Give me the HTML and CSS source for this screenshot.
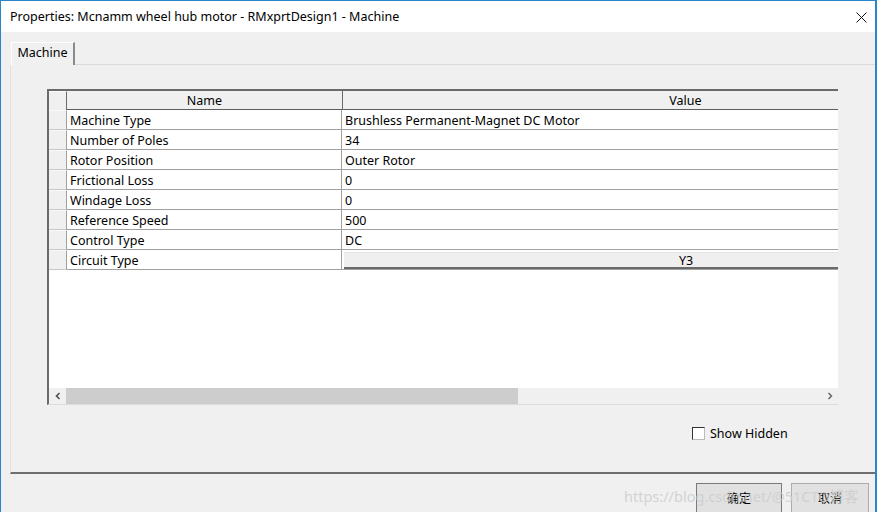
FILE: index.html
```html
<!DOCTYPE html>
<html>
<head>
<meta charset="utf-8">
<link rel="stylesheet" href="styles.css">
</head>
<body>
<div class="window">
  <div class="titlebar">
    <span class="title">Properties: Mcnamm wheel hub motor - RMxprtDesign1 - Machine</span>
    <svg class="close" width="11" height="11" viewBox="0 0 11 11"><path d="M0.5 0.5L10.5 10.5M10.5 0.5L0.5 10.5" stroke="#111" stroke-width="1" fill="none"/></svg>
  </div>
  <div class="body">
    <div class="tabs"><div class="tab">Machine</div><div class="tabline"></div></div>
    <div class="page">
      <div class="grid">
        <div class="row head">
          <div class="rh"></div><div class="hc">Name</div><div class="hc">Value</div>
        </div>
        <div class="row"><div class="rh"></div><div class="c name">Machine Type</div><div class="c">Brushless Permanent-Magnet DC Motor</div></div>
        <div class="row"><div class="rh"></div><div class="c name">Number of Poles</div><div class="c">34</div></div>
        <div class="row"><div class="rh"></div><div class="c name">Rotor Position</div><div class="c">Outer Rotor</div></div>
        <div class="row"><div class="rh"></div><div class="c name">Frictional Loss</div><div class="c">0</div></div>
        <div class="row"><div class="rh"></div><div class="c name">Windage Loss</div><div class="c">0</div></div>
        <div class="row"><div class="rh"></div><div class="c name">Reference Speed</div><div class="c">500</div></div>
        <div class="row"><div class="rh"></div><div class="c name">Control Type</div><div class="c">DC</div></div>
        <div class="row"><div class="rh"></div><div class="c name">Circuit Type</div><div class="c btncell"><div class="cellbtn">Y3</div></div></div>
        <div class="fill"></div>
        <div class="hscroll">
          <div class="arrow">
            <svg width="8" height="8" viewBox="0 0 8 8"><path d="M5.5 1L2.5 4L5.5 7" stroke="#505050" stroke-width="1.6" fill="none"/></svg>
          </div>
          <div class="thumb"></div>
          <div class="track"></div>
          <div class="arrow">
            <svg width="8" height="8" viewBox="0 0 8 8"><path d="M2.5 1L5.5 4L2.5 7" stroke="#606060" stroke-width="1.4" fill="none"/></svg>
          </div>
        </div>
      </div>
      <div class="options">
        <label class="check"><span class="box"></span><span>Show Hidden</span></label>
      </div>
    </div>
    <div class="buttons">
      <div class="btn default">确定</div>
      <div class="btn">取消</div>
    </div>
    <div class="watermark">https://blog.csdn.net/@51CTO博客</div>
  </div>
</div>
</body>
</html>
```

FILE: styles.css
```css
html, body {
  margin: 0;
  padding: 0;
  background: #f0f0f0;
}
body {
  font-family: "Noto Sans", "Noto Sans CJK SC", sans-serif;
  font-size: 12.5px;
  color: #000;
}
.window {
  width: 877px;
  height: 512px;
  box-sizing: border-box;
  border-left: 1px solid #2a86c8;
  border-right: 2px solid #2a86c8;
  border-top: 1px solid #2a86c8;
  overflow: hidden;
  position: relative;
  background: #f0f0f0;
}
.titlebar {
  height: 31px;
  background: #fff;
  display: flex;
  align-items: center;
  justify-content: space-between;
  padding: 0 8px 0 9px;
}
.title {
  font-size: 12.5px;
  white-space: nowrap;
}
.close {
  display: block;
  margin-top: 1px;
}
.body {
  position: relative;
  height: 480px;
}
.tabs {
  display: flex;
  align-items: flex-end;
  padding: 10px 0 0 10px;
  height: 23px;
}
.tab {
  height: 23px;
  width: 64px;
  box-sizing: border-box;
  border-top: 1px solid #fff;
  border-left: 1px solid #fff;
  border-right: 2px solid #8a8a8a;
  display: flex;
  align-items: center;
  justify-content: center;
  padding-bottom: 3px;
}
.tabline {
  flex: 1;
  border-bottom: 1px solid #dadada;
}
.page {
  margin-left: 9px;
  height: 409px;
  box-sizing: border-box;
  border-left: 1px solid #e8dfd6;
  border-bottom: 2px solid #6e6e6e;
  padding: 24px 0 0 36px;
}
.grid {
  width: 791px;
  height: 316px;
  box-sizing: border-box;
  border-left: 2px solid #6b6b6b;
  border-bottom: 1px solid #dcdcdc;
  background: #fff;
  display: flex;
  flex-direction: column;
  overflow: hidden;
}
.row {
  display: grid;
  grid-template-columns: 18px 275px 686px;
  height: 20px;
  box-sizing: border-box;
}
.row.head {
  height: 21px;
  border-top: 2px solid #6b6b6b;
  border-bottom: 1px solid #5d5d5d;
  background: #f0f0f0;
}
.head .rh {
  border-right: 1px solid #6b6b6b;
  border-bottom: none;
}
.hc {
  text-align: center;
  line-height: 19px;
}
.hc + .hc {
  border-left: 1px solid #6b6b6b;
}
.rh {
  background: #f0f0f0;
  border-top: 1px solid #fafafa;
  border-right: 1px solid #a0a0a0;
  border-bottom: 1px solid #c8c8c8;
  box-sizing: border-box;
}
.c {
  border-bottom: 1px solid #a0a0a0;
  line-height: 19px;
  padding: 1px 0 0 3px;
  box-sizing: border-box;
  white-space: nowrap;
  overflow: hidden;
}
.c.name {
  border-right: 1px solid #a0a0a0;
}
.btncell {
  padding: 2px 0 1px 2px;
}
.cellbtn {
  height: 17px;
  box-sizing: border-box;
  background: #efefef;
  border-top: 1px solid #e4e4e4;
  border-bottom: 2px solid #6a6a6a;
  text-align: center;
  line-height: 15px;
}
.fill {
  flex: 1;
}
.hscroll {
  height: 16px;
  display: flex;
  background: #f0f0f0;
}
.arrow {
  width: 17px;
  display: flex;
  align-items: center;
  justify-content: center;
  background: #f0f0f0;
}
.thumb {
  width: 452px;
  background: #cdcdcd;
}
.track {
  flex: 1;
}
.options {
  display: flex;
  padding: 21px 0 0 645px;
}
.check {
  display: flex;
  align-items: center;
  gap: 5px;
  height: 14px;
}
.box {
  width: 13px;
  height: 13px;
  box-sizing: border-box;
  border: 1px solid #333;
  border-right-color: #bbb;
  border-bottom-color: #bbb;
  background: #fff;
}
.buttons {
  display: flex;
  gap: 9px;
  padding: 9px 0 0 695px;
}
.btn {
  width: 86px;
  height: 32px;
  box-sizing: border-box;
  border: 1px solid #adadad;
  background: #e1e1e1;
  display: flex;
  justify-content: center;
  padding-top: 5px;
  font-size: 12px;
}
.btn.default {
  border: 1px solid #7a7a7a;
}
.btn + .btn {
  width: 78px;
}
.watermark {
  position: absolute;
  left: 623px;
  top: 453px;
  font-size: 14.5px;
  color: rgba(205, 205, 205, 0.85);
  white-space: nowrap;
  pointer-events: none;
}
```
